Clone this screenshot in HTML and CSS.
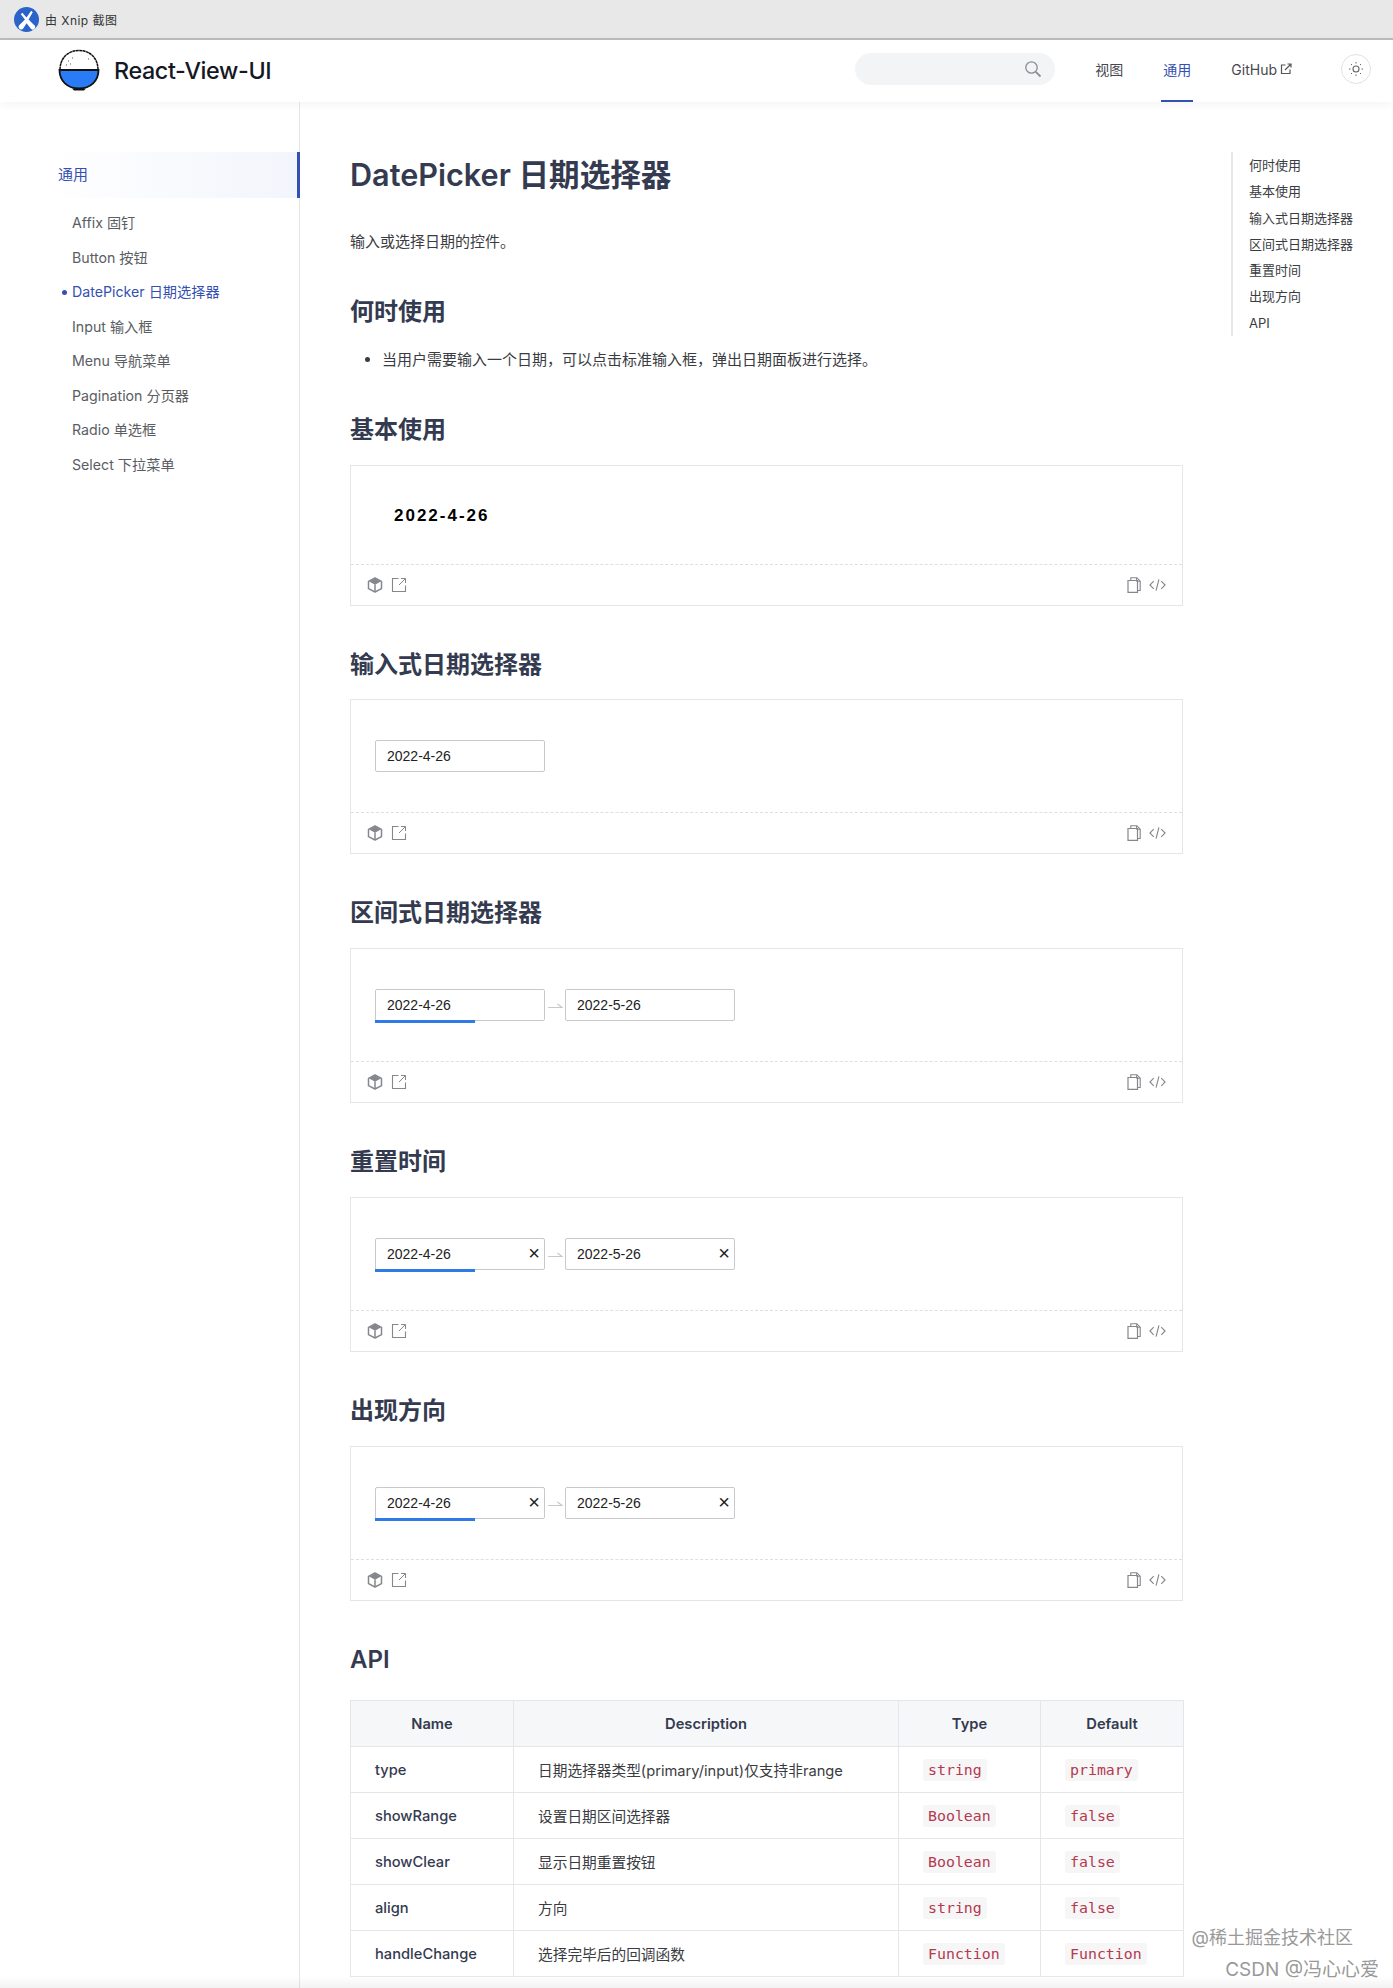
FILE: index.html
```html
<!DOCTYPE html>
<html lang="zh-CN">
<head>
    <meta charset="UTF-8">
    <title>DatePicker 日期选择器 | React-View-UI</title>
    <link rel="stylesheet" href="styles.css">
</head>
<body>
    <svg class="sprites" width="0" height="0">
        <symbol id="i-cube" viewBox="0 0 16 16">
            <path d="M8 1 14.500 4.300v7.400L8 15 1.500 11.700V4.300z" fill="none" stroke="currentColor" stroke-width="1.500" stroke-linejoin="round"/>
            <path d="M8 1.500 13.800 4.500 8 7.700 2.200 4.500z" fill="currentColor"/>
            <path d="M8 7.600v7" stroke="currentColor" stroke-width="1.500"/>
        </symbol>
        <symbol id="i-open" viewBox="0 0 16 16">
            <path d="M7.500 1.500h-6v13h13v-6" fill="none" stroke="currentColor" stroke-width="1.100"/>
            <path d="M8 8 14.200 1.800M10 1.500h4.500V6" fill="none" stroke="currentColor" stroke-width="1"/>
        </symbol>
        <symbol id="i-copy" viewBox="0 0 14 16">
            <path d="M1 3.500h9.500V15.300H1z" fill="none" stroke="currentColor" stroke-width="1.200"/>
            <path d="M3.800 3.500V.8h6l3.400 3.400v9.300h-2.700" fill="none" stroke="currentColor" stroke-width="1.100"/>
            <path d="M9.500 1v3.300h3.500" fill="none" stroke="currentColor" stroke-width=".9"/>
        </symbol>
        <symbol id="i-code" viewBox="0 0 18 14">
            <path d="M5 3 1 7l4 4M13 3l4 4-4 4M10.500 1 7.500 13" fill="none" stroke="currentColor" stroke-width="1.200"/>
        </symbol>
        <symbol id="i-arrow" viewBox="0 0 16 8">
            <path d="M1 5.500h14L10.500 2" fill="none" stroke="currentColor" stroke-width="1.200"/>
        </symbol>
    </svg>

    <div class="xnip-bar">
        <svg class="xnip-logo" viewBox="0 0 24 24">
            <circle cx="12" cy="12" r="12" fill="#2b63c9"/>
            <path d="M16.500 3.500 12 10 8 5.500 6.500 7 10.500 12 5 17.500a2.500 2.500 0 0 0 4 3L12 15.500l3.500 4.500a2.500 2.500 0 1 0 3.500-3L14 12l4-7z" fill="#fff"/>
        </svg>
        <span>由 Xnip 截图</span>
    </div>

    <header class="navbar">
        <a class="brand">
            <svg class="brand-logo" viewBox="0 0 42 42">
                <path d="M2 21C2 9 10 1.500 21 1.500S40 9 40 21z" fill="#fff" stroke="#111" stroke-width="1.500" stroke-dasharray="3 .4"/>
                <path d="M1.500 21h39c0 11-8 18.500-19.500 18.500S1.500 32 1.500 21z" fill="#2a7bf6" stroke="#111" stroke-width="1.800"/>
                <path d="M14 39.500h14l-2 2H16z" fill="#111"/>
                <path d="M10 12h1M14 9h1M8 16h1M12 15h1M30 10h1" stroke="#555" stroke-width="1"/>
            </svg>
            <span class="brand-name">React-View-UI</span>
        </a>
        <div class="nav-right">
            <div class="search">
                <svg viewBox="0 0 18 18" width="18" height="18">
                    <circle cx="7.500" cy="7.500" r="5.700" fill="none" stroke="#8b8e94" stroke-width="1.300"/>
                    <path d="m11.800 11.800 4.700 4.700" stroke="#8b8e94" stroke-width="1.800"/>
                </svg>
            </div>
            <a class="nav-link view-link">视图</a>
            <a class="nav-link common-link active">通用</a>
            <a class="nav-link github-link">GitHub
                <svg viewBox="0 0 12 12" width="12" height="12">
                    <path d="M5.500 2H1.500v8.500H10V6.500" fill="none" stroke="#555" stroke-width="1.200"/>
                    <path d="M5 7l5.500-5.500M7.500 1H11v3.500" fill="none" stroke="#555" stroke-width="1.200"/>
                </svg>
            </a>
            <button class="theme-btn">
                <svg viewBox="0 0 16 16" width="16" height="16">
                    <circle cx="8" cy="8" r="3" fill="none" stroke="#666" stroke-width="1.100"/>
                    <path d="M8 1v1.500M8 13.500V15M1 8h1.500M13.500 8H15M3 3l1 1M12 12l1 1M3 13l1-1M12 4l1-1" stroke="#666" stroke-width="1"/>
                </svg>
            </button>
        </div>
    </header>

    <div class="page">
        <aside class="sidebar">
            <div class="side-group">通用</div>
            <ul class="side-list">
                <li>Affix 固钉</li>
                <li>Button 按钮</li>
                <li class="active">DatePicker 日期选择器</li>
                <li>Input 输入框</li>
                <li>Menu 导航菜单</li>
                <li>Pagination 分页器</li>
                <li>Radio 单选框</li>
                <li>Select 下拉菜单</li>
            </ul>
        </aside>

        <main class="doc">
            <h1>DatePicker 日期选择器</h1>
            <p class="lead">输入或选择日期的控件。</p>

            <h2>何时使用</h2>
            <ul class="usage">
                <li>当用户需要输入一个日期，可以点击标准输入框，弹出日期面板进行选择。</li>
            </ul>

            <h2>基本使用</h2>
            <section class="demo basic">
                <div class="demo-body plain">
                    <span class="date-text">2022-4-26</span>
                </div>
                <div class="demo-foot">
                    <div class="foot-icons">
                        <svg class="ico"><use href="#i-cube"/></svg>
                        <svg class="ico"><use href="#i-open"/></svg>
                    </div>
                    <div class="foot-icons right">
                        <svg class="ico copy"><use href="#i-copy"/></svg>
                        <svg class="ico code"><use href="#i-code"/></svg>
                    </div>
                </div>
            </section>

            <h2>输入式日期选择器</h2>
            <section class="demo">
                <div class="demo-body">
                    <div class="date-input">2022-4-26</div>
                </div>
                <div class="demo-foot">
                    <div class="foot-icons">
                        <svg class="ico"><use href="#i-cube"/></svg>
                        <svg class="ico"><use href="#i-open"/></svg>
                    </div>
                    <div class="foot-icons right">
                        <svg class="ico copy"><use href="#i-copy"/></svg>
                        <svg class="ico code"><use href="#i-code"/></svg>
                    </div>
                </div>
            </section>

            <h2>区间式日期选择器</h2>
            <section class="demo">
                <div class="demo-body">
                    <div class="date-input"><i class="range-bar"></i>2022-4-26</div>
                    <svg class="range-arrow"><use href="#i-arrow"/></svg>
                    <div class="date-input">2022-5-26</div>
                </div>
                <div class="demo-foot">
                    <div class="foot-icons">
                        <svg class="ico"><use href="#i-cube"/></svg>
                        <svg class="ico"><use href="#i-open"/></svg>
                    </div>
                    <div class="foot-icons right">
                        <svg class="ico copy"><use href="#i-copy"/></svg>
                        <svg class="ico code"><use href="#i-code"/></svg>
                    </div>
                </div>
            </section>

            <h2>重置时间</h2>
            <section class="demo">
                <div class="demo-body">
                    <div class="date-input"><i class="range-bar"></i>2022-4-26<span class="clear">×</span></div>
                    <svg class="range-arrow"><use href="#i-arrow"/></svg>
                    <div class="date-input">2022-5-26<span class="clear">×</span></div>
                </div>
                <div class="demo-foot">
                    <div class="foot-icons">
                        <svg class="ico"><use href="#i-cube"/></svg>
                        <svg class="ico"><use href="#i-open"/></svg>
                    </div>
                    <div class="foot-icons right">
                        <svg class="ico copy"><use href="#i-copy"/></svg>
                        <svg class="ico code"><use href="#i-code"/></svg>
                    </div>
                </div>
            </section>

            <h2>出现方向</h2>
            <section class="demo">
                <div class="demo-body">
                    <div class="date-input"><i class="range-bar"></i>2022-4-26<span class="clear">×</span></div>
                    <svg class="range-arrow"><use href="#i-arrow"/></svg>
                    <div class="date-input">2022-5-26<span class="clear">×</span></div>
                </div>
                <div class="demo-foot">
                    <div class="foot-icons">
                        <svg class="ico"><use href="#i-cube"/></svg>
                        <svg class="ico"><use href="#i-open"/></svg>
                    </div>
                    <div class="foot-icons right">
                        <svg class="ico copy"><use href="#i-copy"/></svg>
                        <svg class="ico code"><use href="#i-code"/></svg>
                    </div>
                </div>
            </section>

            <h2 class="api-title">API</h2>
            <table class="api">
                <colgroup>
                    <col class="col-name">
                    <col class="col-desc">
                    <col class="col-type">
                    <col class="col-default">
                </colgroup>
                <thead>
                    <tr>
                        <th>Name</th>
                        <th>Description</th>
                        <th>Type</th>
                        <th>Default</th>
                    </tr>
                </thead>
                <tbody>
                    <tr>
                        <td class="prop">type</td>
                        <td>日期选择器类型(primary/input)仅支持非range</td>
                        <td><code>string</code></td>
                        <td><code>primary</code></td>
                    </tr>
                    <tr>
                        <td class="prop">showRange</td>
                        <td>设置日期区间选择器</td>
                        <td><code>Boolean</code></td>
                        <td><code>false</code></td>
                    </tr>
                    <tr>
                        <td class="prop">showClear</td>
                        <td>显示日期重置按钮</td>
                        <td><code>Boolean</code></td>
                        <td><code>false</code></td>
                    </tr>
                    <tr>
                        <td class="prop">align</td>
                        <td>方向</td>
                        <td><code>string</code></td>
                        <td><code>false</code></td>
                    </tr>
                    <tr>
                        <td class="prop">handleChange</td>
                        <td>选择完毕后的回调函数</td>
                        <td><code>Function</code></td>
                        <td><code>Function</code></td>
                    </tr>
                </tbody>
            </table>
        </main>

        <nav class="toc">
            <a>何时使用</a>
            <a>基本使用</a>
            <a>输入式日期选择器</a>
            <a>区间式日期选择器</a>
            <a>重置时间</a>
            <a>出现方向</a>
            <a>API</a>
        </nav>
    </div>

    <div class="watermark">
        <span class="mark-one">@稀土掘金技术社区</span>
        <span class="mark-two">CSDN @冯心心爱</span>
    </div>
    <div class="bottom-fade"></div>
</body>
</html>
```

FILE: styles.css
```css
:root {
    --primary-color: #3451b2;
    --heading-color: #343a4f;
    --text-color: #3a3c42;
    --muted-color: #5a5d63;
    --border-color: #e4e6e9;
    --icon-color: #85878c;
    --sans: Inter, "Noto Sans CJK SC", sans-serif;
}
* {
    box-sizing: border-box;
}
html, body {
    margin: 0;
    padding: 0;
}
body {
    position: relative;
    height: 1988px;
    overflow: hidden;
    background-color: #fff;
    color: var(--text-color);
    font-family: var(--sans);
    font-size: 14px;
}
.sprites {
    position: absolute;
}

/* xnip strip */
.xnip-bar {
    display: flex;
    align-items: center;
    gap: 6px;
    height: 40px;
    padding: 0 14px;
    background-color: #e8e8e8;
    border-bottom: 2px solid #bdbdbd;
    color: #333;
    font-size: 12px;
    letter-spacing: 0.45px;
}
.xnip-logo {
    width: 25px;
    height: 25px;
}

/* top nav */
.navbar {
    position: relative;
    z-index: 2;
    display: flex;
    align-items: center;
    justify-content: space-between;
    height: 62px;
    padding: 0 22px 0 58px;
    background-color: #fff;
    box-shadow: 0 2px 10px rgba(0,0,0,0.05);
}
.brand {
    display: flex;
    align-items: center;
    gap: 14px;
    margin-bottom: 2px;
}
.brand-logo {
    width: 42px;
    height: 42px;
}
.brand-name {
    color: #141824;
    font-size: 23.300px;
    font-weight: 500;
    letter-spacing: -0.35px;
}
.nav-right {
    display: flex;
    align-items: center;
    height: 100%;
}
.search {
    display: flex;
    align-items: center;
    justify-content: flex-end;
    width: 200px;
    height: 32px;
    margin-bottom: 4px;
    padding-right: 13px;
    border-radius: 16px;
    background-color: #f3f4f6;
}
.nav-link {
    display: flex;
    align-items: center;
    gap: 3px;
    height: 100%;
    padding-bottom: 4px;
    color: #46484e;
    font-size: 14px;
}
.view-link {
    margin-left: 40px;
}
.common-link {
    position: relative;
    margin-left: 40px;
}
.common-link.active {
    color: var(--primary-color);
}
.common-link.active::after {
    content: "";
    position: absolute;
    left: -2px;
    right: -2px;
    bottom: 0;
    height: 2px;
    background-color: var(--primary-color);
}
.github-link {
    margin-left: 40px;
}
.theme-btn {
    display: flex;
    align-items: center;
    justify-content: center;
    width: 30px;
    height: 30px;
    margin: 0 0 4px 49px;
    padding: 0;
    border: 1px solid #dfe1e5;
    border-radius: 50%;
    background-color: #fff;
}

/* page columns */
.page {
    display: flex;
    align-items: flex-start;
}
.sidebar {
    flex: none;
    width: 300px;
    height: 1886px;
    padding-top: 50px;
    border-right: 1px solid #e6e7ea;
}
.side-group {
    height: 46px;
    margin-right: -1px;
    padding-left: 58px;
    border-right: 3px solid var(--primary-color);
    background: linear-gradient(90deg, #fff 15%, #f3f5fc 100%);
    color: var(--primary-color);
    font-size: 15px;
    line-height: 46px;
}
.side-list {
    list-style: none;
    margin: 8px 0 0;
    padding: 0 0 0 72px;
}
.side-list li {
    position: relative;
    height: 34.500px;
    color: var(--muted-color);
    font-size: 14.200px;
    line-height: 34.500px;
}
.side-list li.active {
    color: var(--primary-color);
}
.side-list li.active::before {
    content: "";
    position: absolute;
    left: -10px;
    top: 15px;
    width: 5px;
    height: 5px;
    border-radius: 50%;
    background-color: var(--primary-color);
}

/* doc content */
.doc {
    flex: none;
    width: 933px;
    padding: 0 50px;
}
h1 {
    margin: 51px 0 0;
    color: var(--heading-color);
    font-size: 30.600px;
    font-weight: 600;
    line-height: 44px;
}
.lead {
    margin: 33px 0 0;
    font-size: 15px;
    line-height: 24px;
}
h2 {
    margin: 44px 0 20px;
    color: var(--heading-color);
    font-size: 24px;
    font-weight: 600;
    line-height: 30px;
}
.lead + h2 {
    margin: 43px 0 21px;
}
.usage {
    margin: 0;
    padding-left: 32px;
    font-size: 15px;
    line-height: 24px;
}
.usage + h2 {
    margin: 43px 0 20px;
}
.demo {
    border: 1px solid var(--border-color);
}
.demo.basic + h2 {
    margin-bottom: 19px;
}
.demo-body {
    display: flex;
    align-items: center;
    height: 113px;
    padding: 0 24px;
    border-bottom: 1px dashed #dedfe2;
}
.demo-body.plain {
    height: 99px;
    padding-top: 2px;
    padding-left: 43px;
}
.date-text {
    color: #000;
    font-family: "Liberation Sans", sans-serif;
    font-size: 17px;
    font-weight: 700;
    letter-spacing: 2px;
}
.date-input {
    position: relative;
    width: 170px;
    height: 32px;
    padding-left: 11px;
    border: 1px solid #c9c9cc;
    border-radius: 2px;
    background-color: #fff;
    color: #222;
    font-family: "Liberation Sans", sans-serif;
    font-size: 14px;
    line-height: 30px;
}
.range-bar {
    position: absolute;
    left: -1px;
    bottom: -3px;
    width: 100px;
    height: 3px;
    background-color: #2f7ae5;
}
.clear {
    position: absolute;
    right: 4px;
    top: -1px;
    color: #222;
    font-size: 20px;
    font-weight: 300;
}
.range-arrow {
    flex: none;
    width: 16px;
    height: 8px;
    margin: 1px 2px 0;
    color: #c9c9cc;
}
.demo-foot {
    display: flex;
    align-items: center;
    justify-content: space-between;
    height: 40px;
    padding: 0 16px 0 16px;
}
.foot-icons {
    display: flex;
    align-items: center;
    gap: 8px;
}
.foot-icons.right {
    gap: 8px;
}
.ico {
    width: 16px;
    height: 16px;
    color: var(--icon-color);
}
.ico.copy {
    width: 14px;
    height: 16px;
}
.ico.code {
    width: 17px;
    height: 14px;
}
.api-title {
    margin-bottom: 25px;
}

/* api table */
.api {
    width: 833px;
    table-layout: fixed;
    border-collapse: collapse;
    font-size: 14.700px;
}
.col-name {
    width: 163px;
}
.col-desc {
    width: 385px;
}
.col-type {
    width: 142px;
}
.col-default {
    width: 143px;
}
.api th,
.api td {
    height: 46px;
    padding: 0 24px;
    border: 1px solid var(--border-color);
    text-align: left;
}
.api th {
    background-color: #f6f7f9;
    color: var(--heading-color);
    font-weight: 600;
    text-align: center;
}
.api td.prop {
    color: var(--heading-color);
    font-weight: 500;
}
code {
    display: inline-block;
    height: 22px;
    padding: 0 5px;
    border-radius: 3px;
    background-color: #f6f6f7;
    color: #b5394f;
    font-family: "DejaVu Sans Mono", monospace;
    font-size: 14.900px;
    line-height: 22px;
}

/* right rail */
.toc {
    display: flex;
    flex-direction: column;
    margin: 50px 0 0 -2px;
    padding-left: 16px;
    border-left: 2px solid #e6e7ea;
}
.toc a {
    height: 26.300px;
    color: var(--text-color);
    font-size: 13px;
    line-height: 26.300px;
}

/* stuff printed on top of the screenshot */
.watermark {
    position: absolute;
    right: 14px;
    bottom: 6px;
    display: flex;
    flex-direction: column;
    align-items: flex-end;
    gap: 8px;
    color: #999;
    line-height: 24px;
}
.mark-one {
    margin-right: 26px;
    font-size: 18px;
}
.mark-two {
    font-size: 19px;
}
.bottom-fade {
    position: absolute;
    left: 0;
    right: 0;
    bottom: 0;
    height: 12px;
    background: linear-gradient(rgba(0,0,0,0), rgba(0,0,0,0.05));
}
```
